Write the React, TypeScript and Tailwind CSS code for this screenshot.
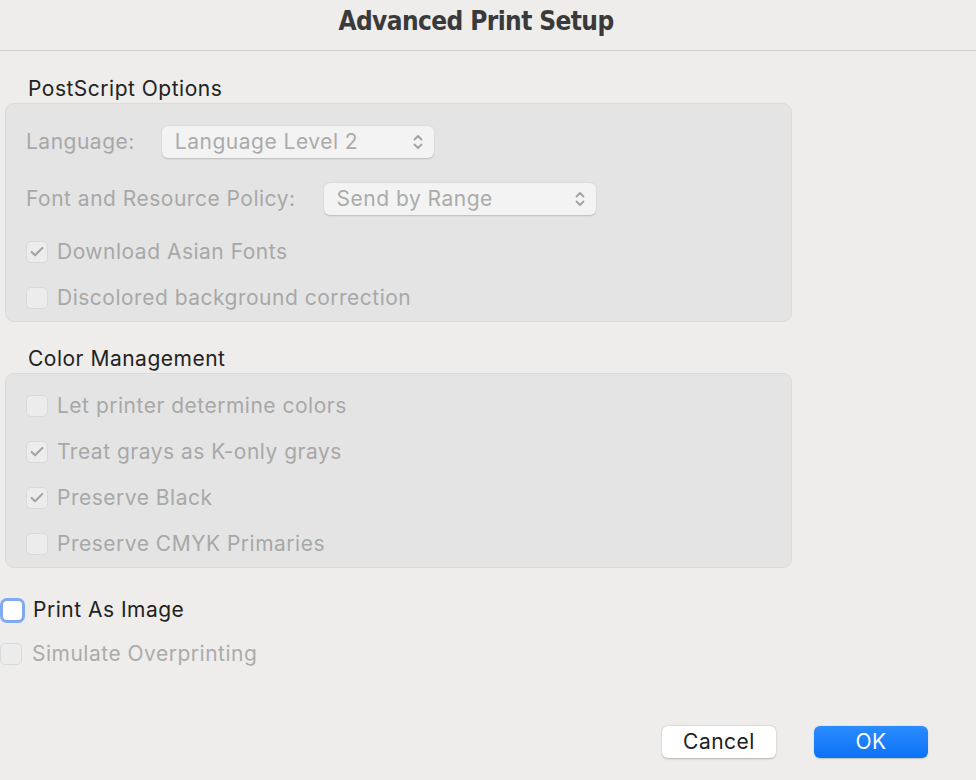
import { Check } from 'lucide-react';

const font = { fontFamily: 'Inter, "Liberation Sans", sans-serif' };

function Chevrons() {
  return (
    <svg width="12" height="18" viewBox="0 0 12 18" fill="none" stroke="#a3a3a3" strokeWidth="1.8" strokeLinecap="round" strokeLinejoin="round">
      <path d="M2.5 6.5 L6 3 L9.5 6.5" />
      <path d="M2.5 11.5 L6 15 L9.5 11.5" />
    </svg>
  );
}

function Select({ value }: { value: string }) {
  return (
    <div className="flex items-center justify-between w-[272px] h-[32px] pl-[13px] pr-[10px] bg-[#f3f3f3] rounded-[6px] shadow-[0_0.5px_1.5px_rgba(0,0,0,0.18)] text-[#ababab]">
      <span>{value}</span>
      <Chevrons />
    </div>
  );
}

function Box({ checked }: { checked?: boolean }) {
  return (
    <div className="w-[22px] h-[22px] rounded-[5px] border border-[#d9d9d9] bg-[#ececec] flex items-center justify-center shrink-0">
      {checked && <Check className="w-[16px] h-[16px] text-[#a5a5a5]" strokeWidth={3.2} />}
    </div>
  );
}

function DisabledCheck({ label, checked }: { label: string; checked?: boolean }) {
  return (
    <div className="flex items-center h-[46px] gap-[9px] text-[#a8a8a8]">
      <Box checked={checked} />
      <span>{label}</span>
    </div>
  );
}

export default function App() {
  return (
    <div className="w-[976px] h-[780px] bg-[#eeedeb] flex flex-col overflow-hidden text-[21px] tracking-[0.5px]" style={font}>
      <div className="h-[51px] border-b border-[#cfcfcf] flex items-center justify-center pr-[24px] shrink-0">
        <h1
          className="text-[26px] font-bold text-[#3a3a3a] tracking-[-0.6px] -mt-[8px]"
          style={{ fontFamily: '"Liberation Sans Narrow", "DejaVu Sans Condensed", sans-serif' }}
        >
          Advanced Print Setup
        </h1>
      </div>

      <div className="pl-[5px] flex flex-col">
        <div className="mt-[26px] ml-[23px] h-[24px] leading-[24px] text-[#222]">PostScript Options</div>
        <div className="mt-[2px] w-[787px] bg-[#e4e4e4] border border-[#dadada] rounded-[9px] px-[20px] flex flex-col">
          <div className="mt-[21px] h-[34px] flex items-center gap-[27px]">
            <span className="text-[#a8a8a8]">Language:</span>
            <Select value="Language Level 2" />
          </div>
          <div className="mt-[23px] h-[34px] flex items-center gap-[28px]">
            <span className="text-[#a8a8a8]">Font and Resource Policy:</span>
            <Select value="Send by Range" />
          </div>
          <div className="mt-[13px]">
            <DisabledCheck label="Download Asian Fonts" checked />
            <DisabledCheck label="Discolored background correction" />
          </div>
        </div>

        <div className="mt-[25px] ml-[23px] h-[24px] leading-[24px] text-[#222]">Color Management</div>
        <div className="mt-[2px] w-[787px] bg-[#e4e4e4] border border-[#dadada] rounded-[9px] px-[20px] pt-[9px] flex flex-col">
          <DisabledCheck label="Let printer determine colors" />
          <DisabledCheck label="Treat grays as K-only grays" checked />
          <DisabledCheck label="Preserve Black" checked />
          <DisabledCheck label="Preserve CMYK Primaries" />
        </div>
      </div>

      <div className="mt-[20px] flex flex-col">
        <div className="h-[44px] flex items-center gap-[8px] text-[#222]">
          <div className="w-[25px] h-[25px] rounded-[7px] border-[3.5px] border-[#7fa9f2] bg-white shrink-0" />
          <span>Print As Image</span>
        </div>
        <div className="h-[44px] flex items-center gap-[10px] text-[#ababab]">
          <Box />
          <span>Simulate Overprinting</span>
        </div>
      </div>

      <div className="mt-[50px] flex justify-end gap-[38px] pr-[48px]">
        <button className="w-[114px] h-[32px] rounded-[6px] bg-white shadow-[0_0.5px_2px_rgba(0,0,0,0.25)] text-[#222]">
          Cancel
        </button>
        <button className="w-[114px] h-[32px] rounded-[6px] bg-gradient-to-b from-[#2a8cff] to-[#0a72f5] text-white shadow-[0_0.5px_1.5px_rgba(0,0,0,0.2)]">
          OK
        </button>
      </div>
    </div>
  );
}
